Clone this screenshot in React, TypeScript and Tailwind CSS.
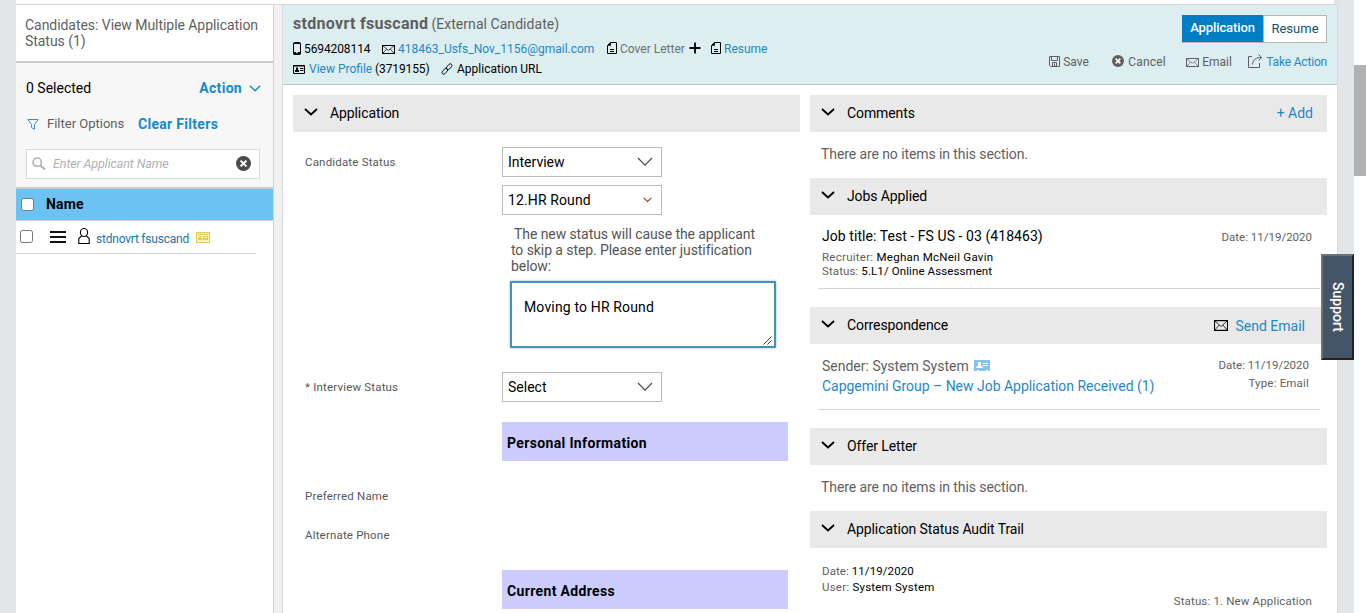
import React from "react";
import type { ReactNode } from "react";

type IconProps = { className?: string };

const Caret = ({ className = "" }: IconProps) => (
  <svg className={`shrink-0 ${className}`} width="14" height="8" viewBox="0 0 14 8" fill="none" stroke="currentColor" strokeWidth="1.9">
    <path d="M1 1l6 5.4L13 1" />
  </svg>
);

const ThinCaret = ({ className = "" }: IconProps) => (
  <svg className={`shrink-0 text-[#4a4a4a] ${className}`} width="16" height="10" viewBox="0 0 16 10" fill="none" stroke="currentColor" strokeWidth="1.2">
    <path d="M1 1l7 7.2L15 1" />
  </svg>
);

const SmallCaret = ({ className = "" }: IconProps) => (
  <svg className={`shrink-0 ${className}`} width="9" height="6" viewBox="0 0 9 6" fill="none" stroke="currentColor" strokeWidth="1.1">
    <path d="M.6.8l3.9 3.7L8.4.8" />
  </svg>
);

const ActionCaret = ({ className = "" }: IconProps) => (
  <svg className={`shrink-0 ${className}`} width="12" height="7" viewBox="0 0 12 7" fill="none" stroke="currentColor" strokeWidth="1.4">
    <path d="M.8.8L6 5.8 11.2.8" />
  </svg>
);

const Phone = ({ className = "" }: IconProps) => (
  <svg className={`shrink-0 ${className}`} width="8" height="13" viewBox="0 0 8 13">
    <rect x=".5" y=".5" width="7" height="12" rx="1" fill="none" stroke="currentColor" />
    <path d="M1 1.5h6M1 10.5h2v1.5h2v-1.5h2v1.8H1z" stroke="currentColor" fill="currentColor" strokeWidth=".9" />
  </svg>
);

const Mail = ({ className = "" }: IconProps) => (
  <svg className={`shrink-0 ${className}`} viewBox="0 0 13 9" preserveAspectRatio="none" fill="none" stroke="currentColor" strokeWidth="1">
    <rect x=".5" y=".5" width="12" height="8" />
    <path d="M.5.5l6 4.8 6-4.8M.5 8.5l4.3-4.4M12.500 8.5L8.200 4.100" strokeWidth=".7" />
  </svg>
);

const Doc = ({ className = "" }: IconProps) => (
  <svg className={`shrink-0 ${className}`} width="10" height="12" viewBox="0 0 10 12" fill="none" stroke="currentColor">
    <path d="M3.500.5h6v11h-9v-8z" />
    <path d="M0 3.800L3.800 0v3.800z" fill="currentColor" stroke="none" />
    <path d="M3 7.500h4M3 9.500h4" />
  </svg>
);

const Plus = ({ className = "" }: IconProps) => (
  <svg className={`shrink-0 ${className}`} width="12" height="12" viewBox="0 0 12 12" fill="none" stroke="currentColor" strokeWidth="1.8">
    <path d="M6 .5v11M.5 6h11" />
  </svg>
);

const ProfileCard = ({ className = "" }: IconProps) => (
  <svg className={`shrink-0 ${className}`} width="12" height="9" viewBox="0 0 12 9">
    <path d="M.5 1v7.500h11V1" fill="none" stroke="currentColor" />
    <path d="M0 0h12v1.500H0zM3 2.500h2v2.500h1V7H2V5h1zM7 3h3.500v1H7zM7 5h3.500v1H7z" fill="currentColor" />
  </svg>
);

const Link = ({ className = "" }: IconProps) => (
  <svg className={`shrink-0 ${className}`} width="12" height="12" viewBox="0 0 12 12" fill="none" stroke="currentColor" strokeWidth=".9">
    <rect x="-3.300" y="-1.700" width="6.600" height="3.400" rx="1.700" transform="translate(8.200 3.700) rotate(-48)" />
    <rect x="-3.300" y="-1.700" width="6.600" height="3.400" rx="1.700" transform="translate(3.800 8.300) rotate(-48)" />
  </svg>
);

const Save = ({ className = "" }: IconProps) => (
  <svg className={`shrink-0 ${className}`} width="11" height="11" viewBox="0 0 11 11" fill="none" stroke="currentColor">
    <path d="M.5.5h10v10h-9l-1-1zM2.500.5v4h6v-4M3.500 10.500v-4h4v4" />
    <path d="M5.500 7.500v3" />
  </svg>
);

const CircleX = ({ className = "" }: IconProps) => (
  <svg className={`shrink-0 ${className}`} viewBox="0 0 14 14">
    <circle cx="7" cy="7" r="7" fill="currentColor" />
    <path d="M4.300 4.300l5.400 5.400M9.700 4.300L4.300 9.700" stroke="#fff" strokeWidth="1.900" />
  </svg>
);

const Share = ({ className = "" }: IconProps) => (
  <svg className={`shrink-0 ${className}`} width="15" height="14" viewBox="0 0 15 14" fill="none" stroke="currentColor">
    <path d="M4 2.500H.5v11h11V9M4.500 10.500C5 5.500 8 3.500 13.500 3.500M10.500.500l3.200 3-3.200 3" />
  </svg>
);

const Funnel = ({ className = "" }: IconProps) => (
  <svg className={`shrink-0 ${className}`} width="12" height="11" viewBox="0 0 12 11" fill="none" stroke="currentColor">
    <path d="M.8.5h10.400L7.500 5.300v5L4.500 8.500V5.300z" />
  </svg>
);

const Search = ({ className = "" }: IconProps) => (
  <svg className={`shrink-0 ${className}`} width="14" height="14" viewBox="0 0 14 14" fill="none" stroke="currentColor" strokeWidth="1.700">
    <circle cx="5.200" cy="5.200" r="4.200" />
    <path d="M8.300 8.300l4.600 4.200" strokeWidth="2.200" />
  </svg>
);

const Person = ({ className = "" }: IconProps) => (
  <svg className={`shrink-0 ${className}`} width="12" height="16" viewBox="0 0 12 16" fill="none" stroke="currentColor" strokeWidth="1.100">
    <path d="M3.700 7.800L.8 10.500v5h10.400v-5L8.300 7.800" />
    <ellipse cx="6" cy="4.500" rx="3.600" ry="4" />
  </svg>
);

const NameBadge = ({ className = "" }: IconProps) => (
  <svg className={`shrink-0 ${className}`} width="14" height="11" viewBox="0 0 14 11">
    <rect x=".5" y=".5" width="13" height="10" fill="#fbf3b4" stroke="#dfcb5c" />
    <path d="M2 2h10v1H2zM3 4h2v2h1v2H2V6h1zM7 4h5v4H7z" fill="#dfcb5c" />
    <path d="M8 5h3v1H8z" fill="#fbf3b4" />
  </svg>
);

const BlueCard = ({ className = "" }: IconProps) => (
  <svg className={`shrink-0 ${className}`} width="16" height="11" viewBox="0 0 16 11">
    <path d="M0 0h16v11h-2v-1h-2v1H5v-1H3v1H0z" fill="#85c3ec" />
    <path d="M4 2h3v4l2 1v1H2V7l2-1zM9 3h5v1H9zM9 5h5v1H9z" fill="#fff" />
  </svg>
);

const Checkbox = ({ className = "" }: IconProps) => (
  <span className={`block size-[13px] shrink-0 rounded-[2.500px] border border-[#767676] bg-white ${className}`} />
);

const Section = ({ title, children }: { title: string; children?: ReactNode }) => (
  <div className="flex h-[37px] shrink-0 items-center bg-[#e9e9e9] pl-[11px] text-black">
    <Caret className="-mt-1" />
    <span className="ml-3 flex-1 tracking-[-0.100px]">{title}</span>
    {children}
  </div>
);

const SelectBox = ({ value, children }: { value: string; children: ReactNode }) => (
  <div className="flex h-[30px] w-40 items-center justify-between border border-[#bbb] bg-white pr-2 pl-[5px] text-black">
    <span>{value}</span>
    {children}
  </div>
);

const FormRow = ({ label, className = "", children }: { label: string; className?: string; children?: ReactNode }) => (
  <div className={`flex items-start ${className}`}>
    <span className="w-[197px] shrink-0 text-[11.500px] leading-[30px] tracking-[0.180px] text-[#585858]">{label}</span>
    {children}
  </div>
);

const FormHeading = ({ children }: { children: ReactNode }) => (
  <div className="mt-5 ml-[197px] flex h-[39px] w-[286px] items-center bg-[#ccccff] pt-1 pl-[5px] font-bold tracking-[0.350px] text-black">
    {children}
  </div>
);

const Sidebar = () => (
  <aside className="flex w-[258px] shrink-0 flex-col border-r border-[#d3d3d3] bg-white">
    <h1 className="h-[56px] shrink-0 pt-3 pl-[9px] leading-4 tracking-[-0.050px]">
      Candidates: View Multiple Application
      <br />
      Status (1)
    </h1>
    <div className="h-[128px] shrink-0 border-t-2 border-b-2 border-[#cccccc] bg-[#f7f7f7]">
      <div className="mt-[15px] flex h-5 items-center pr-3 pl-[10px]">
        <span className="text-black">0 Selected</span>
        <span className="ml-auto font-bold tracking-[0.300px] text-[#148bcb]">Action</span>
        <ActionCaret className="ml-[7px] text-[#148bcb]" />
      </div>
      <div className="mt-4 flex h-5 items-center pl-[11px]">
        <Funnel className="text-[#3f8fbe]" />
        <span className="ml-2 w-[77px] text-[13px]">Filter Options</span>
        <span className="ml-[14px] font-bold tracking-[0.300px] text-[#148bcb]">Clear Filters</span>
      </div>
      <div className="mt-[15px] ml-[10px] flex h-[30px] w-[234px] items-center border border-[#d9d9d9] bg-white pr-2 pl-[5px]">
        <Search className="text-[#b5b5b5]" />
        <span className="ml-[7px] text-[12.500px] tracking-[-0.100px] text-[#b0b0b0] italic">Enter Applicant Name</span>
        <CircleX className="-mt-[2px] ml-auto size-[15px] text-[#4b4b4b]" />
      </div>
    </div>
    <div className="flex h-8 shrink-0 items-center border-b border-[#d3d3d3] bg-[#6cc2f3] pl-[5px]">
      <Checkbox />
      <span className="ml-3 font-bold tracking-[0.200px] text-black">Name</span>
    </div>
    <div className="flex h-[33px] w-[240px] shrink-0 items-center border-b border-[#d3d3d3] pl-1">
      <Checkbox className="-mt-px" />
      <svg className="ml-[17px] shrink-0" width="16" height="12" viewBox="0 0 16 12" fill="#111">
        <path d="M0 0h16v2H0zM0 5h16v2H0zM0 10h16v2H0z" />
      </svg>
      <Person className="-mt-[2px] ml-3 text-black" />
      <span className="ml-[6px] pt-1 text-[12px] tracking-[-0.220px] text-[#2573a8]">stdnovrt fsuscand</span>
      <NameBadge className="ml-[7px]" />
    </div>
  </aside>
);

const CandidateHeader = () => (
  <header className="flex h-20 shrink-0 justify-between border-b border-[#c4c4c4] bg-[#dceef0] pr-[10px] pl-[10px]">
    <div className="flex flex-col">
      <div className="mt-[9px] flex h-5 items-center">
        <span className="text-[16px] font-bold tracking-[0.300px]">stdnovrt fsuscand</span>
        <span className="ml-[3px] pt-px text-[14px] tracking-[0.050px]">(External Candidate)</span>
      </div>
      <div className="mt-[5px] flex h-5 items-center text-[12px] text-black">
        <Phone className="-mt-px" />
        <span className="ml-[3px] w-[78px] tracking-[-0.100px]">5694208114</span>
        <Mail className="h-[9px] w-[13px]" />
        <span className="ml-[3px] w-[209px] text-[#1e88c5]">418463_Usfs_Nov_1156@gmail.com</span>
        <Doc className="-mt-[2px]" />
        <span className="ml-[3px] w-[69px] text-[#707070]">Cover Letter</span>
        <Plus className="-mt-[2px]" />
        <Doc className="-mt-[2px] ml-[10px]" />
        <span className="ml-[3px] text-[#1e88c5]">Resume</span>
      </div>
      <div className="flex h-5 items-center text-[12px] text-black">
        <ProfileCard />
        <span className="ml-1 w-[66px] text-[#1e88c5]">View Profile</span>
        <span className="w-[66px] tracking-[-0.100px]">(3719155)</span>
        <Link />
        <span className="ml-1">Application URL</span>
      </div>
    </div>
    <div className="flex flex-col items-end pt-[10px]">
      <div className="flex h-7 w-[145px] border border-[#b8b8b8] bg-white text-[13px]">
        <span className="-mt-px -ml-px flex h-[27px] w-[81px] items-center justify-center bg-[#007dc3] pb-px font-medium tracking-[-0.100px] text-white">Application</span>
        <span className="flex flex-1 items-center justify-center border-l border-[#b8b8b8] text-[#14506f]">Resume</span>
      </div>
      <div className="mt-[9px] flex h-5 items-center text-[12px]">
        <Save className="-mt-[2px]" />
        <span className="ml-[3px] w-[49px]">Save</span>
        <CircleX className="-mt-[2px] size-[12px]" />
        <span className="ml-[4px] w-[58px] tracking-[0.200px]">Cancel</span>
        <Mail className="h-[9px] w-[13px]" />
        <span className="ml-[3px] w-[46px]">Email</span>
        <Share className="-mt-[2px]" />
        <span className="ml-[3px] tracking-[-0.180px] text-[#1e88c5]">Take Action</span>
      </div>
    </div>
  </header>
);

const ApplicationColumn = () => (
  <section className="w-[507px] shrink-0">
    <Section title="Application" />
    <div className="pl-3">
      <FormRow label="Candidate Status" className="mt-[15px] h-[202px]">
        <div className="flex flex-col">
          <SelectBox value="Interview"><ThinCaret /></SelectBox>
          <div className="mt-2 tracking-[0.120px]">
            <SelectBox value="12.HR Round"><SmallCaret className="mr-[1px] text-[#9c3e32]" /></SelectBox>
          </div>
          <p className="mt-[11px] ml-[9px] w-[250px] indent-[3px] leading-4 tracking-[-0.080px] text-[#555]">
            The new status will cause the applicant
            to skip a step. Please enter justification
            below:
          </p>
          <div className="mt-[7px] ml-2 flex h-[67px] w-[266px] justify-between rounded-[1px] border-2 border-[#4a90b4] bg-white pt-4 pl-3 shadow-[0_0_2px_#5aa3c8]">
            <span className="leading-4 tracking-[0.150px] text-black">Moving to HR Round</span>
            <svg className="mr-[2px] mb-[1px] self-end" width="9" height="9" viewBox="0 0 9 9" stroke="#444" strokeWidth="1">
              <path d="M.5 8.500l8-8M4.500 8.500l4-4" />
            </svg>
          </div>
        </div>
      </FormRow>
      <FormRow label="* Interview Status" className="mt-[23px]">
        <SelectBox value="Select"><ThinCaret /></SelectBox>
      </FormRow>
      <FormHeading>Personal Information</FormHeading>
      <FormRow label="Preferred Name" className="mt-[20px]" />
      <FormRow label="Alternate Phone" className="mt-[9px]" />
      <FormHeading>Current Address</FormHeading>
    </div>
  </section>
);

const DetailsColumn = () => (
  <section className="flex w-[517px] shrink-0 flex-col">
    <Section title="Comments">
      <span className="mr-[14px] text-[#1e88c5]">+ Add</span>
    </Section>
    <p className="h-[46px] pl-[11px] leading-[45px] tracking-[-0.090px]">There are no items in this section.</p>
    <Section title="Jobs Applied" />
    <div className="ml-2 flex h-[74px] w-[502px] justify-between border-b border-[#d6d6d6] pr-2 pl-1">
      <div className="pt-3 text-[11.500px] leading-[14px]">
        <p className="h-5 text-[14px] leading-[19px] tracking-[0.060px] text-black">Job title: Test - FS US - 03 (418463)</p>
        <p className="mt-[3px] tracking-[0.260px]">Recruiter: <span className="text-black">Meghan McNeil Gavin</span></p>
        <p className="tracking-[0.100px]">Status: <span className="text-black">5.L1/ Online Assessment</span></p>
      </div>
      <span className="pt-[13px] text-[11.500px] leading-[18px]">Date: 11/19/2020</span>
    </div>
    <div className="mt-[18px]">
      <Section title="Correspondence">
        <Mail className="h-[11px] w-[14px]" />
        <span className="mt-[2px] mr-[22px] ml-2 text-[#1e88c5]">Send Email</span>
      </Section>
    </div>
    <div className="ml-2 flex h-[66px] w-[502px] justify-between border-b border-[#d6d6d6] pr-[11px] pl-1">
      <div className="pt-3 leading-5">
        <div className="flex items-center">
          <span>Sender: System System</span>
          <BlueCard className="-mt-px ml-[5px]" />
        </div>
        <p className="text-[#1e88c5] tracking-[-0.020px]">Capgemini Group – New Job Application Received (1)</p>
      </div>
      <div className="pt-3 text-right text-[11.500px] leading-[18px]">
        <p>Date: 11/19/2020</p>
        <p className="tracking-[0.180px]">Type: Email</p>
      </div>
    </div>
    <div className="mt-[18px]">
      <Section title="Offer Letter" />
    </div>
    <p className="h-[46px] pl-[11px] leading-[45px] tracking-[-0.090px]">There are no items in this section.</p>
    <Section title="Application Status Audit Trail" />
    <div className="pt-[15px] pr-[15px] pl-3 text-[11.500px] leading-4 tracking-[0.150px]">
      <p className="tracking-[0.080px]">Date: <span className="text-black">11/19/2020</span></p>
      <p className="tracking-[0.230px]">User: <span className="text-black">System System</span></p>
      <p className="-mt-[2px] text-right">Status: 1. New Application</p>
    </div>
  </section>
);

export default function App() {
  return (
    <div className="relative flex h-[613px] w-[1366px] overflow-hidden bg-white font-[Roboto,'Liberation_Sans',sans-serif] text-[14px] whitespace-nowrap text-[#5f5f5f]">
      <div className="w-4 shrink-0 bg-[#e2e6e9]" />
      <div className="flex w-[1322px] shrink-0 flex-col">
        <div className="flex h-[5px] shrink-0 justify-end border-b border-[#d9d9d9]">
          <div className="w-1 bg-[#e2e6e9]" />
        </div>
        <div className="flex min-h-0 flex-1">
          <Sidebar />
          <div className="w-2 shrink-0 bg-[#f1f1f1]" />
          <main className="flex w-[1056px] shrink-0 flex-col border-r border-l border-[#d9d9d9]">
            <CandidateHeader />
            <div className="flex gap-[10px] pt-[10px] pl-[10px] [&_p]:whitespace-pre-line">
              <ApplicationColumn />
              <DetailsColumn />
            </div>
          </main>
        </div>
      </div>
      <div className="w-4 shrink-0 bg-[#e2e6e9]" />
      <div className="w-3 shrink-0 bg-white pt-[65px]">
        <div className="h-[111px] bg-[#b0b0b0]" />
      </div>
      <button className="absolute top-[254px] left-[1321px] flex h-[106px] w-[33px] items-center justify-center border-2 border-t-[#6f7375] border-r-[#202225] border-b-[#202225] border-l-[#6f7375] bg-[#445567] font-medium text-white [writing-mode:vertical-rl]">
        Support
      </button>
    </div>
  );
}
